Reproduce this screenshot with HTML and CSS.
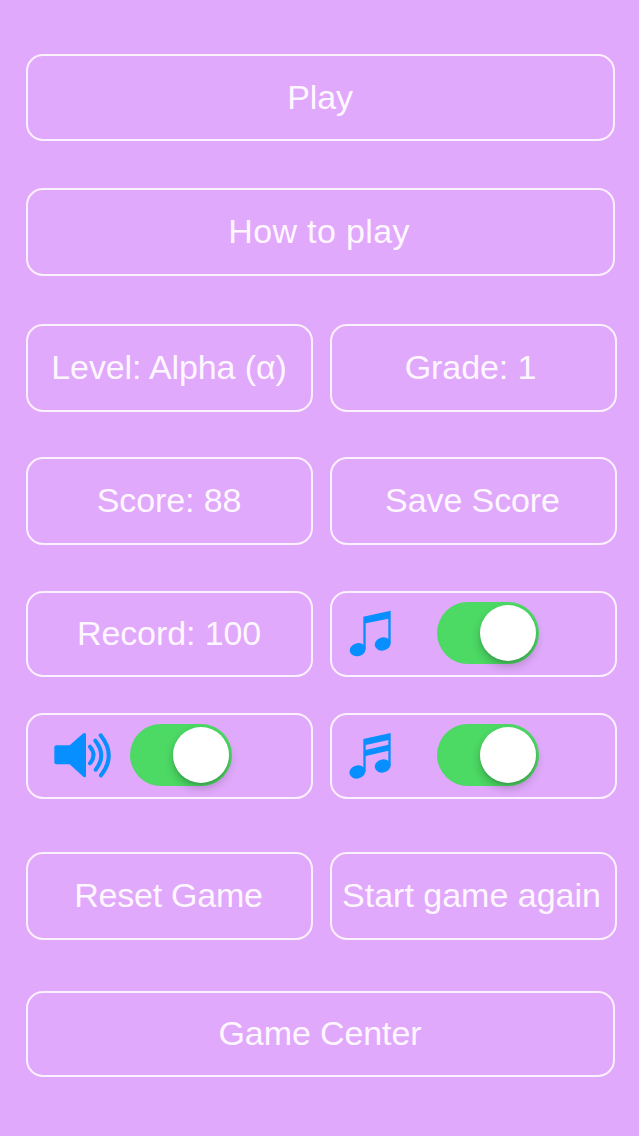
FILE: index.html
```html
<!DOCTYPE html>
<html lang="en">
<head>
  <meta charset="UTF-8">
  <title>Game Menu</title>
  <link rel="stylesheet" href="styles.css">
</head>
<body>
  <div class="menu">
    <button class="btn play">Play</button>
    <button class="btn help">How to play</button>

    <div class="row level">
      <button class="btn">Level: Alpha (α)</button>
      <button class="btn grade">Grade: 1</button>
    </div>

    <div class="row score">
      <button class="btn">Score: 88</button>
      <button class="btn save">Save Score</button>
    </div>

    <div class="row record">
      <button class="btn">Record: 100</button>
      <div class="btn option music">
        <svg width="42" height="47" viewBox="88 90 126 141">
          <path d="M131 110L213 92V190H206V116L138 130V208H131Z"/>
          <ellipse cx="114" cy="209" rx="24" ry="19.5" transform="rotate(-15 114 209)"/>
          <ellipse cx="189" cy="192" rx="24" ry="19.5" transform="rotate(-15 189 192)"/>
        </svg>
        <span class="switch"></span>
      </div>
    </div>

    <div class="row sound">
      <div class="btn option speaker">
        <svg width="58" height="46" viewBox="101 98 174 138">
          <path d="M108 138H148L189 102Q197 98 197 107V229Q197 237 189 232L148 195H108Q102 195 102 189V144Q102 138 108 138Z"/>
          <g class="waves">
            <path d="M209 142Q230 167 209 192"/>
            <path d="M225 124Q260 168 226 211"/>
            <path d="M241 108Q289 168 242 228"/>
          </g>
        </svg>
        <span class="switch"></span>
      </div>
      <div class="btn option music">
        <svg width="42" height="47" viewBox="88 97 126 141">
          <path fill-rule="evenodd" d="M131 118L213 100V198H206V153L138 169V216H131ZM138 136V151L206 135V121Z"/>
          <ellipse cx="113" cy="217" rx="24" ry="19.5" transform="rotate(-15 113 217)"/>
          <ellipse cx="189" cy="199" rx="24" ry="19.5" transform="rotate(-15 189 199)"/>
        </svg>
        <span class="switch"></span>
      </div>
    </div>

    <div class="row reset">
      <button class="btn reset-game">Reset Game</button>
      <button class="btn again">Start game again</button>
    </div>

    <button class="btn center">Game Center</button>
  </div>
</body>
</html>
```
FILE: styles.css
```css
body {
  margin: 0;
  background: #e0a9fb;
  font-family: "Liberation Sans", Arial, sans-serif;
}

.menu {
  display: flex;
  flex-direction: column;
  box-sizing: border-box;
  height: 1136px;
  padding: 54px 22px 0 26px;
}

.btn {
  box-sizing: border-box;
  width: 287px;
  height: 100%;
  padding: 0 1px 2px 0;
  border: 2px solid #fdf0ff;
  border-radius: 17px;
  background: none;
  color: #fff7ff;
  font-family: inherit;
  font-size: 34px;
  line-height: 40px;
  letter-spacing: -0.1px;
  white-space: nowrap;
}

.row {
  display: flex;
  gap: 17px;
  height: 88px;
}

.play, .help, .center {
  width: 589px;
  height: 88px;
}

.play { height: 87px; }
.help { margin-top: 47px; letter-spacing: 0.35px; padding-right: 3px; }
.level { margin-top: 48px; }
.score { margin-top: 45px; }
.record { margin-top: 46px; height: 86px; }
.sound { margin-top: 36px; height: 86px; }
.reset { margin-top: 53px; }
.center { margin-top: 51px; height: 86px; }

.grade { padding-right: 6px; }
.save { padding-right: 2px; }
.reset-game { letter-spacing: -0.25px; padding-right: 2px; }
.again { padding-right: 4px; letter-spacing: 0; }

.option {
  display: flex;
  align-items: center;
}

.option svg {
  flex: none;
  fill: #078fff;
}

.waves {
  fill: none;
  stroke: #078fff;
  stroke-width: 12;
  stroke-linecap: round;
}

.music {
  gap: 46px;
  padding-left: 17px;
}

.speaker {
  gap: 18px;
  padding-left: 26px;
}

.switch {
  display: flex;
  align-items: center;
  justify-content: flex-end;
  box-sizing: border-box;
  width: 102px;
  height: 62px;
  padding-right: 3px;
  border-radius: 31px;
  background: #4cd964;
}

.switch::after {
  content: "";
  width: 56px;
  height: 56px;
  border-radius: 50%;
  background: #fff;
  box-shadow: 0 5px 10px rgba(0, 0, 0, 0.22), 0 2px 2px rgba(0, 0, 0, 0.08);
}
```
